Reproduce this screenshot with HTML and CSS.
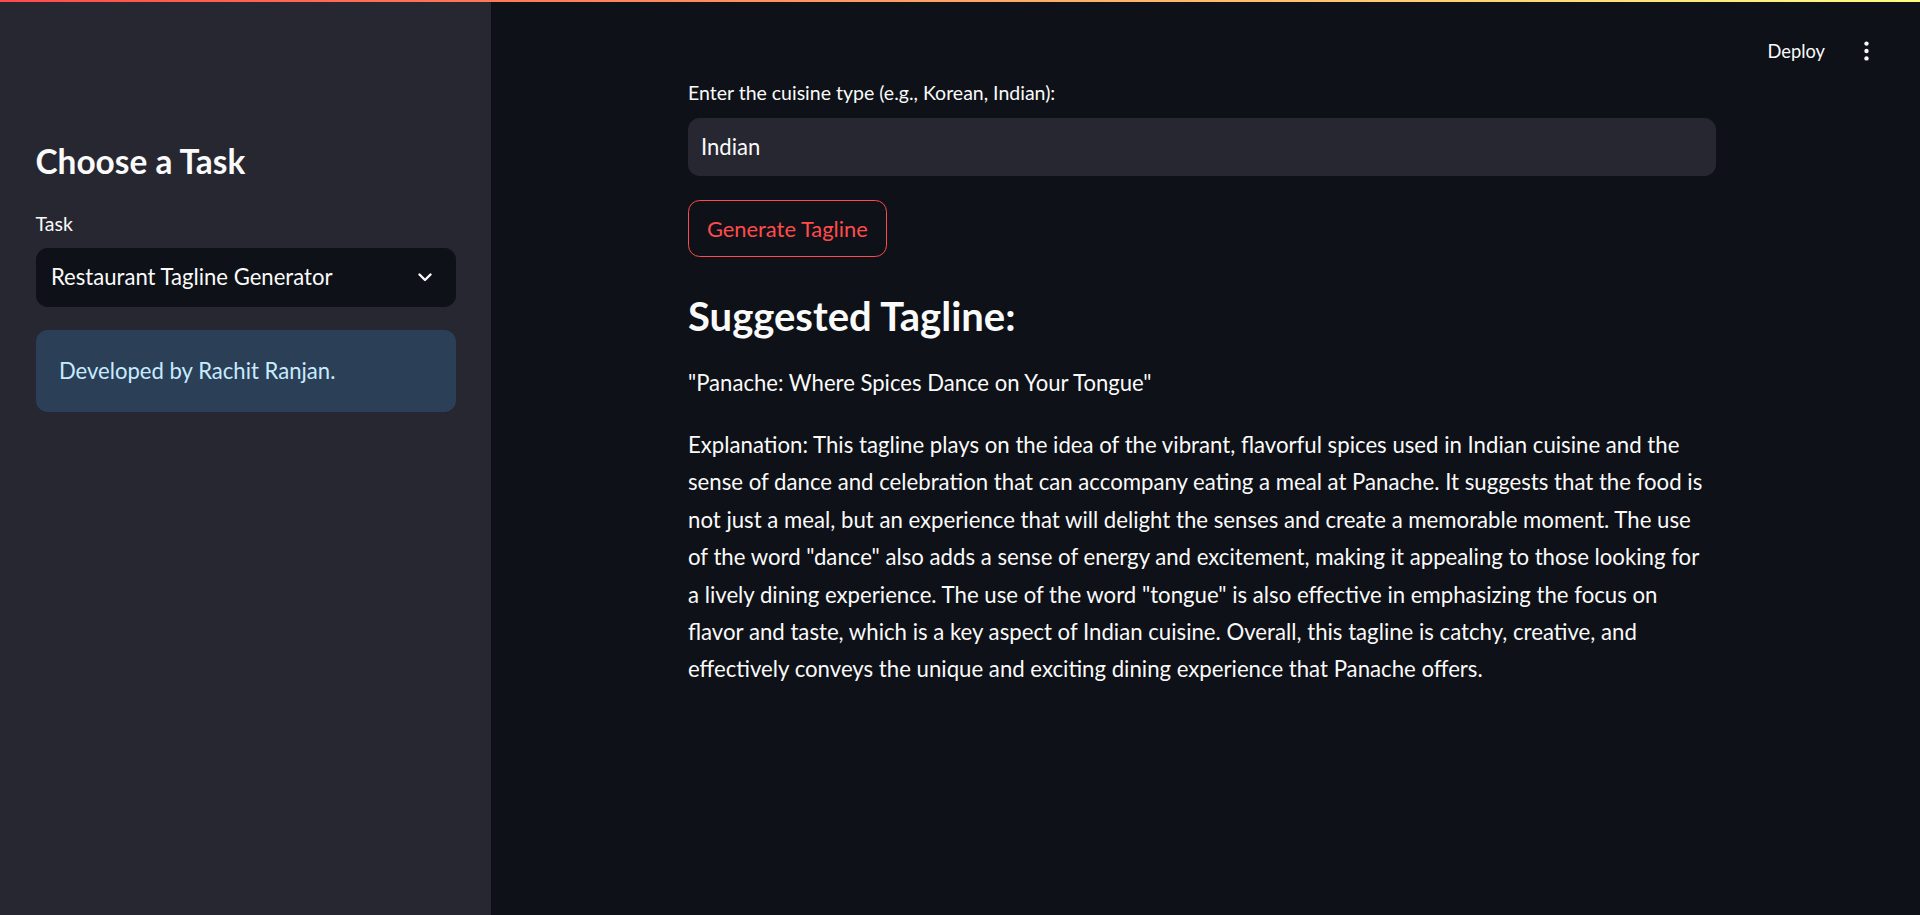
FILE: index.html
```html
<!DOCTYPE html>
<html lang="en">
<head>
<meta charset="utf-8">
<title>Restaurant Tagline Generator</title>
<link rel="stylesheet" href="styles.css">
</head>
<body>
<div class="decoration"></div>
<div class="app">
  <aside class="sidebar">
    <h2 class="side-title">Choose a Task</h2>
    <label class="widget-label side-label">Task</label>
    <div class="select">
      <span>Restaurant Tagline Generator</span>
      <svg class="chevron" viewBox="0 0 14 9" width="14" height="9"><path d="M1.5 1.5 L7 7 L12.5 1.5" fill="none" stroke="#fafafa" stroke-width="2.4" stroke-linecap="round" stroke-linejoin="round"/></svg>
    </div>
    <div class="info">Developed by Rachit Ranjan.</div>
  </aside>
  <main class="main">
    <header class="toolbar">
      <span class="deploy">Deploy</span>
      <span class="menu"><svg viewBox="0 0 5 20" width="5" height="20"><circle cx="2.5" cy="2.6" r="2.2" fill="#fafafa"/><circle cx="2.5" cy="10" r="2.2" fill="#fafafa"/><circle cx="2.5" cy="17.4" r="2.2" fill="#fafafa"/></svg></span>
    </header>
    <section class="block">
      <label class="widget-label main-label">Enter the cuisine type (e.g., Korean, Indian):</label>
      <div class="text-input">Indian</div>
      <button class="btn">Generate Tagline</button>
      <h3 class="subheader">Suggested Tagline:</h3>
      <p class="para quote">"Panache: Where Spices Dance on Your Tongue"</p>
      <p class="para explain">Explanation: This tagline plays on the idea of the vibrant, flavorful spices used in Indian cuisine and the sense of dance and celebration that can accompany eating a meal at Panache. It suggests that the food is not just a meal, but an experience that will delight the senses and create a memorable moment. The use of the word "dance" also adds a sense of energy and excitement, making it appealing to those looking for a lively dining experience. The use of the word "tongue" is also effective in emphasizing the focus on flavor and taste, which is a key aspect of Indian cuisine. Overall, this tagline is catchy, creative, and effectively conveys the unique and exciting dining experience that Panache offers.</p>
    </section>
  </main>
</div>
</body>
</html>
```

FILE: styles.css
```css
* { box-sizing: border-box; }
html, body { margin: 0; padding: 0; }
body {
  background: #0e1117;
  color: #fafafa;
  font-family: Lato, "Noto Sans", sans-serif;
  overflow: hidden;
}
.decoration {
  position: absolute;
  top: 0; left: 0; right: 0;
  height: 2px;
  background: linear-gradient(90deg, rgb(255, 75, 75), rgb(255, 253, 128));
  z-index: 10;
}
.app { display: flex; height: 915px; }
.sidebar {
  width: 491px;
  flex: none;
  background: #262730;
  padding: 141.4px 35px 0 35.5px;
}
.side-title {
  margin: 0;
  font-size: 33.4px;
  line-height: 40px;
  font-weight: 700;
}
.widget-label { display: block; font-size: 19.5px; line-height: 28px; }
.side-label { margin-top: 28.75px; }
.select {
  margin-top: 9.55px;
  height: 59px;
  background: #0e1117;
  border-radius: 11.7px;
  display: flex;
  align-items: center;
  justify-content: space-between;
  padding: 0 24px 0 15.5px;
  font-size: 22.1px;
  line-height: 30px;
}
.chevron { display: block; }
.info {
  margin-top: 23.3px;
  height: 81.7px;
  border-radius: 11.7px;
  background: rgb(43, 63, 87);
  color: rgb(199, 235, 255);
  padding: 25.85px 23.4px;
  font-size: 22.1px;
  line-height: 30px;
}
.main { flex: 1; min-width: 0; }
.toolbar {
  display: flex;
  justify-content: flex-end;
  align-items: center;
  height: 66.2px;
  padding: 36.2px 51.5px 0 0;
}
.deploy { font-size: 18.3px; line-height: 30px; }
.menu { margin-left: 38.5px; display: flex; }
.block { width: 1028px; margin-left: 197px; padding-top: 13.25px; }
.text-input {
  margin-top: 10.25px;
  height: 58px;
  border-radius: 11.7px;
  background: #262730;
  padding: 0 13px;
  display: flex;
  align-items: center;
  font-size: 22.1px;
  line-height: 30px;
}
.btn {
  display: block;
  margin-top: 24.3px;
  height: 57.3px;
  padding: 0 17.9px;
  border: 1.46px solid rgb(255, 75, 75);
  border-radius: 11.7px;
  background: transparent;
  color: rgb(255, 75, 75);
  font-family: inherit;
  font-size: 21.9px;
  line-height: 30px;
}
.subheader {
  margin: 34.9px 0 0;
  font-size: 40px;
  line-height: 48px;
  font-weight: 700;
}
.para { margin: 0; font-size: 22.2px; line-height: 37.4px; }
.quote { margin-top: 23.55px; font-size: 22.1px; }
.explain { margin-top: 24.85px; max-width: 1020px; }
```
